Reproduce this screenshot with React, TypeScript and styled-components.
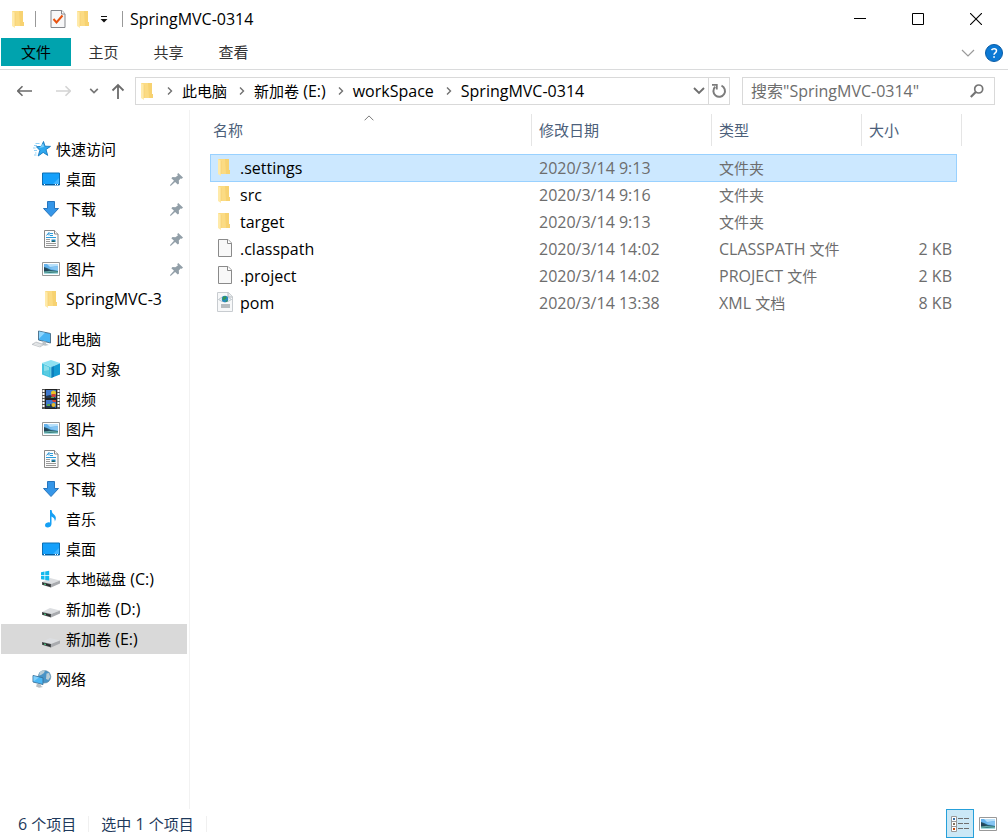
import React from "react";
import styled, { createGlobalStyle, css } from "styled-components";

const GlobalStyle = createGlobalStyle`
  *, *::before, *::after { box-sizing: border-box; }
  body {
    margin: 0;
    background: #fff;
    color: #000;
    font-family: "Open Sans", "Noto Sans CJK SC", sans-serif;
    font-size: 16px;
    line-height: 24px;
  }
  button, input { font: inherit; color: inherit; }
  button { border: 0; padding: 0; background: transparent; }
  svg { display: block; flex: none; }
`;

/* ---------- text ---------- */

const Han = styled.span`
  font-size: 15px;
`;

/* Chinese runs are set one pixel smaller than the Latin text around them. */
function Mixed({ text }: { text: string }) {
  const runs = text.split(/([\u4e00-\u9fff]+)/).filter(Boolean);
  return (
    <>
      {runs.map((run, i) =>
        /[\u4e00-\u9fff]/.test(run) ? <Han key={i}>{run}</Han> : run
      )}
    </>
  );
}

/* ---------- icons ---------- */

const FolderIcon = () => (
  <svg width="14" height="18" viewBox="0 0 14 18" aria-hidden="true">
    <path d="M1 1h11v11h1v4H1z" fill="#fbdb83" />
    <path d="M8 1h4v11h1v4H9z" fill="#f7d271" />
    <path d="M1 1l3 2v15l-3-2z" fill="#ffeaa9" />
    <path d="M4 3v13" stroke="#f3cd6b" strokeWidth=".6" />
  </svg>
);

const CheckDocIcon = () => (
  <svg width="16" height="18" viewBox="0 0 16 18" aria-hidden="true">
    <path d="M1 .5h11L15 4v13.500H1z" fill="#f7f7f8" stroke="#85878c" />
    <path d="M11.500.5V4H15" fill="#fff" stroke="#85878c" />
    <path d="M3.500 9l3 3.500 6-7" fill="none" stroke="#e8520f" strokeWidth="2" />
  </svg>
);

const QuickMenuIcon = () => (
  <svg width="8" height="8" viewBox="0 0 8 8" aria-hidden="true">
    <path d="M1 1.500h6" stroke="#111" />
    <path d="M.5 4h7L4 7.500z" fill="#111" />
  </svg>
);

const MinimizeIcon = () => (
  <svg width="12" height="12" viewBox="0 0 12 12" aria-hidden="true">
    <path d="M0 5.500h12" stroke="#000" />
  </svg>
);
const MaximizeIcon = () => (
  <svg width="12" height="12" viewBox="0 0 12 12" aria-hidden="true">
    <path d="M.5.5h11v11H.5z" fill="none" stroke="#000" />
  </svg>
);
const CloseIcon = () => (
  <svg width="12" height="12" viewBox="0 0 12 12" aria-hidden="true">
    <path d="M0 0l12 12M12 0L0 12" stroke="#000" strokeWidth="1.100" />
  </svg>
);

const ExpandIcon = () => (
  <svg width="14" height="8" viewBox="0 0 14 8" aria-hidden="true">
    <path d="M1 1l6 6 6-6" fill="none" stroke="#9a9a9a" strokeWidth="1.200" />
  </svg>
);

const HelpIcon = () => (
  <svg width="18" height="18" viewBox="0 0 18 18" aria-hidden="true">
    <circle cx="9" cy="9" r="8.500" fill="#0c79d4" stroke="#0a5ca5" />
    <path d="M6.500 6.200q.8-1.500 2.600-1.500 2.400 0 2.400 2 0 1.200-1.300 2.100-1.200.8-1.200 2" fill="none" stroke="#fff" strokeWidth="1.500" />
    <path d="M8.200 12.200h1.700v1.600H8.200z" fill="#fff" />
  </svg>
);

const ArrowIcon = ({ color, flip }: { color: string; flip?: boolean }) => (
  <svg width="16" height="12" viewBox="0 0 16 12" aria-hidden="true">
    <path
      d={flip ? "M1 6h14M10.500 1.200L15.300 6l-4.800 4.800" : "M15 6H1M5.500 1.200L.7 6l4.800 4.800"}
      fill="none"
      stroke={color}
      strokeWidth="1.600"
    />
  </svg>
);

const UpIcon = () => (
  <svg width="14" height="16" viewBox="0 0 14 16" aria-hidden="true">
    <path d="M7 16V2M1.500 7.500L7 2l5.500 5.500" fill="none" stroke="#6b6b6b" strokeWidth="1.800" />
  </svg>
);

const SmallDownIcon = () => (
  <svg width="10" height="6" viewBox="0 0 10 6" aria-hidden="true">
    <path d="M1.200.8L5 4.600 8.800.8" fill="none" stroke="#777" strokeWidth="1.700" />
  </svg>
);

const DownIcon = () => (
  <svg width="12" height="8" viewBox="0 0 12 8" aria-hidden="true">
    <path d="M1 1l5 5 5-5" fill="none" stroke="#6f6f6f" strokeWidth="1.900" />
  </svg>
);

const CrumbIcon = () => (
  <svg width="6" height="8" viewBox="0 0 6 8" aria-hidden="true">
    <path d="M1 .5L4.500 4 1 7.500" fill="none" stroke="#707070" strokeWidth="1.400" />
  </svg>
);

const RefreshIcon = () => (
  <svg width="16" height="16" viewBox="0 0 16 16" aria-hidden="true">
    <path d="M4.200 3.800A5.800 5.800 0 1 0 10.500 2.700" fill="none" stroke="#7c7c7c" strokeWidth="2" />
    <path d="M1 1.800h4.800v4.800" fill="none" stroke="#7c7c7c" strokeWidth="1.800" />
  </svg>
);

const SearchIcon = () => (
  <svg width="14" height="14" viewBox="0 0 14 14" aria-hidden="true">
    <circle cx="8.700" cy="5" r="4" fill="none" stroke="#747474" strokeWidth="1.700" />
    <path d="M5.800 8L.8 13" stroke="#747474" strokeWidth="2.200" />
  </svg>
);

const SortIcon = () => (
  <svg width="10" height="6" viewBox="0 0 10 6" aria-hidden="true">
    <path d="M.6 5.300L5 .9l4.400 4.400" fill="none" stroke="#7a7a7a" />
  </svg>
);

const PinIcon = () => (
  <svg width="13" height="13" viewBox="0 0 13 13" aria-hidden="true">
    <path d="M8.200 0L13 4.600 11.800 5.800 10.600 5.400 8.800 7.600 9 10.400 7.800 11.400 5.100 8.900 1.200 12.600 0 13 .3 11.700 4 7.800 1.300 5.300 2.500 4 5.300 4.300 7.900 2.400 7.200 1.200z" fill="#929fa8" />
  </svg>
);

const StarIcon = () => (
  <svg width="18" height="18" viewBox="0 0 18 18" aria-hidden="true">
    <path d="M10.500 1.500l1.500 4.700 5.500.2-4.500 3.100 1.700 5.900-4.500-3-5 3.600 1.600-5.700-3.400-3.600 5-.3z" fill="#2fa8ef" stroke="#1478be" strokeWidth=".9" />
    <path d="M10.200 3.500l.8 3.600-4.800 1z" fill="#7ed0fb" />
    <path d="M2.500 3.500h4M1 5.500h3M0 8h2.500M1 10.500h3M2 13h1.500M1 15h2.500" stroke="#61bdf2" strokeWidth=".7" />
  </svg>
);

const DesktopIcon = () => (
  <svg width="18" height="18" viewBox="0 0 18 18" aria-hidden="true">
    <path d="M.5 3h17v12H.5z" fill="#15a0fb" stroke="#0d70b6" />
    <path d="M11 14l6-6v6z" fill="#43b5ff" />
    <path d="M1 14.500h16" stroke="#075c99" />
    <path d="M2 14.500h1M13 14.500h1M15 14.500h1" stroke="#fff" />
  </svg>
);

const DownloadIcon = () => (
  <svg width="18" height="18" viewBox="0 0 18 18" aria-hidden="true">
    <path d="M5.500 1.500h7v7h4L9 16.500 1.500 8.500h4z" fill="#3596e8" stroke="#2775bd" />
  </svg>
);

const DocumentIcon = () => (
  <svg width="18" height="18" viewBox="0 0 18 18" aria-hidden="true">
    <path d="M2.500.5h10l3.500 3.500v13.500H2.500z" fill="#fcfcfc" stroke="#888" />
    <path d="M12.500.5V4H16" fill="#fff" stroke="#888" />
    <path d="M4.500 5.500L7 2.500v3" fill="none" stroke="#188bd0" />
    <path d="M8 3.500h3M8 5.500h3M4 7.500h10" stroke="#2b9dde" />
    <path d="M4 9.500h4M4 11.500h4M4 13.500h10M4 15.500h10" stroke="#9a9a9a" />
    <path d="M9.500 9.500h4v2.500h-4z" fill="#2487bb" />
    <path d="M9.500 12l1.500-1.200 2.500 1.200z" fill="#275942" />
  </svg>
);

const PictureIcon = () => (
  <svg width="18" height="18" viewBox="0 0 18 18" aria-hidden="true">
    <path d="M.5 2.500h17v13H.5z" fill="#fff" stroke="#999" />
    <path d="M2 4h14v10H2z" fill="#65b2ec" />
    <path d="M5 4h11v2L8 7z" fill="#b8e0fa" />
    <path d="M7 8l9-2v5z" fill="#86c5f2" />
    <path d="M2 7l3 1 4 2 7 1v1H2z" fill="#27596a" />
    <path d="M2 7.500l3 1.500 2 2H2z" fill="#24445a" />
    <path d="M2 11h14v3H2z" fill="#a7dbe0" />
    <path d="M2 11l5 .5 9-.5v1.500l-8 .5-6-.5z" fill="#3b817e" />
  </svg>
);

const ComputerIcon = () => (
  <svg width="20" height="18" viewBox="0 0 20 18" aria-hidden="true">
    <path d="M6.500 1l12 2.500v9.500l-12-3z" fill="#48b3f3" stroke="#476b85" strokeWidth=".9" />
    <path d="M7 1.500l6 1.300-6 6z" fill="#8ed6ff" />
    <path d="M11 11l3 .8v2l3 1.200-4 .8-3-1z" fill="#bcc3c8" />
    <path d="M4 12l8 2.400-4 2.600-8-2.600z" fill="#d2d6d9" stroke="#aeb4b9" strokeWidth=".6" />
    <path d="M3 13.200l6.500 2M1.800 14.200l6.200 2" stroke="#f5f5f5" strokeWidth=".6" />
  </svg>
);

const CubeIcon = () => (
  <svg width="18" height="18" viewBox="0 0 18 18" aria-hidden="true">
    <path d="M0 3l9-3 9 3-9 4z" fill="#8ee2f2" />
    <path d="M0 3l9 4v11l-9-3.500z" fill="#47c4e0" />
    <path d="M9 7l9-4v11.500L9 18z" fill="#139bd2" />
    <path d="M2 5l5 2.300v8.200l-5-2z" fill="#8cdeea" />
    <path d="M2 11l5-1v5.500l-5-2z" fill="#58cbe0" />
    <path d="M9 7l3-1.300v11L9 18z" fill="#0c80bd" />
    <path d="M0 3l9 4 9-4M9 7v11" fill="none" stroke="#b3eef7" strokeWidth=".5" />
  </svg>
);

const VideoIcon = () => (
  <svg width="18" height="20" viewBox="0 0 18 20" aria-hidden="true">
    <path d="M0 0h18v20H0z" fill="#555" />
    <path d="M1.500 1v18M16.500 1v18" stroke="#fff" strokeWidth="2" strokeDasharray="2 1" />
    <path d="M3 0h12v20H3z" fill="#222" />
    <path d="M4 1h10v8H4zM4 11h10v8H4z" fill="#3f78cc" />
    <path d="M4 7l4-1 6 3H4zM4 17l5-2 5 4H4z" fill="#20364e" />
    <circle cx="11.500" cy="4" r="2.500" fill="#e5c52a" />
    <path d="M9.500 5h4v3h-4zM10 11h4v2h-3z" fill="#d54231" />
    <path d="M9 8h3v1H9zM5 15h3v2H5z" fill="#56a552" />
    <circle cx="11.500" cy="16" r="2" fill="#e6b92b" />
  </svg>
);

const MusicIcon = () => (
  <svg width="18" height="18" viewBox="0 0 18 18" aria-hidden="true">
    <path d="M8 0h1.500q.2 3 2.500 4.500 3.300 3 .8 7 .3-3.500-3.300-5v7.500q-.2 3-3.500 3.500-3 .1-3-2 0-2.700 3.500-3.200.8 0 1.500.2z" fill="#16a0f4" />
  </svg>
);

const DriveBody = () => (
  <>
    <path d="M0 12l8-4 10 2.500-9 3.500z" fill="#dcdee1" />
    <path d="M9 14l9-3.500v3L9 17.500z" fill="#a9abaf" />
    <path d="M0 12l9 2v3.500l-9-2.800z" fill="#4b4f51" />
    <path d="M1 13l7 1.700v1.500l-7-1.900z" fill="#24292a" />
    <path d="M2 14l2 .5" stroke="#50d68a" />
  </>
);

const DriveIcon = () => (
  <svg width="18" height="18" viewBox="0 0 18 18" aria-hidden="true">
    <DriveBody />
  </svg>
);

const SystemDriveIcon = () => (
  <svg width="20" height="18" viewBox="-1 0 20 18" aria-hidden="true">
    <DriveBody />
    <path d="M-1 2.200l3.500-.7v3.800H-1zM3.200 1.400l4-.7v4.600h-4zM-1 6h3.500v3.800L-1 9.200zM3.200 6h4v4.600l-4-.7z" fill="#13b9ed" />
  </svg>
);

const NetworkIcon = () => (
  <svg width="20" height="18" viewBox="0 0 20 18" aria-hidden="true">
    <circle cx="12.500" cy="6.800" r="6.300" fill="#4a94c6" stroke="#6c8ea5" strokeWidth=".6" />
    <path d="M8 2q3-2.400 5-1.400L12 3l-3 2-2 .5zM14.500 3.500l2.500-.5 1.300 4-2 3-2.300-1z" fill="#b9cdd6" />
    <path d="M1 5.500l10 2.300v6.700L1 12z" fill="#4ab7f5" stroke="#3b7198" strokeWidth=".9" />
    <path d="M1.500 6.100L7 7.400l-5.500 4z" fill="#82cffb" />
    <path d="M5 13.500l4 1v1.500l2 1-4 .7-3-1.200z" fill="#b7bfc4" />
  </svg>
);

const BlankFileIcon = () => (
  <svg width="16" height="18" viewBox="0 0 16 18" aria-hidden="true">
    <path d="M1.500.5h9.500l3.500 3.500v13.500h-13z" fill="#f8f8f8" stroke="#8a8a8a" />
    <path d="M10.500.5V4.500h4" fill="#fff" stroke="#8a8a8a" />
  </svg>
);

const XmlFileIcon = () => (
  <svg width="16" height="20" viewBox="0 0 16 20" aria-hidden="true">
    <path d="M.5.5h11L15.500 4.500v15H.5z" fill="#f7f8f9" stroke="#c8ccd0" />
    <path d="M11 .5V5h4.500" fill="#e8ebee" stroke="#b5babe" />
    <path d="M1.500 7.500q6.500-6 13 0-6.500 5-13 0z" fill="#eef2f4" stroke="#a9b5bc" strokeWidth=".7" />
    <circle cx="8" cy="7" r="3.200" fill="#2589c3" />
    <path d="M6 4.800l3-.5.5 2-2 1.500-2 .5zM8 9l3-1-1 2z" fill="#369750" />
    <path d="M4 13h9M4 15h9" stroke="#a3a8ac" strokeWidth="1.500" />
  </svg>
);

const DetailsViewIcon = () => (
  <svg width="18" height="16" viewBox="0 0 18 16" aria-hidden="true">
    <path d="M.5.5h5v15h-5zM.5 5.500h5M.5 10.500h5" fill="#fff" stroke="#999" />
    <path d="M2 2h2v2H2z" fill="#356fa7" />
    <path d="M2 7h2v2H2z" fill="#86755e" />
    <path d="M2 12h2v2H2z" fill="#c64b0c" />
    <path d="M7 2.500h5M13 2.500h5M7 7.500h5M13 7.500h5M7 12.500h5M13 12.500h5" stroke="#6f6f6f" />
  </svg>
);

/* ---------- window frame ---------- */

const Window = styled.div`
  display: flex;
  flex-direction: column;
  min-height: 100vh;
`;

const TitleBar = styled.header`
  display: flex;
  align-items: center;
  height: 38px;
  padding: 0 3px 0 11px;
`;

const QuickTools = styled.div`
  display: flex;
  align-items: center;
  gap: 10px;
`;

const Divider = styled.span`
  width: 1px;
  height: 16px;
  background: #999;
`;

const WindowTitle = styled.h1`
  flex: 1;
  margin: 0 0 0 7px;
  font-size: 16px;
  font-weight: 400;
`;

const IconButton = styled.button<{ $width?: number }>`
  display: flex;
  align-items: center;
  justify-content: center;
  ${(p) => p.$width && css`width: ${p.$width}px;`}
  align-self: stretch;
`;

const Ribbon = styled.nav`
  display: flex;
  align-items: flex-start;
  height: 32px;
  padding: 0 5px 0 1px;
  border-bottom: 1px solid #dadbdc;
`;

const Tab = styled.button<{ $primary?: boolean }>`
  width: ${(p) => (p.$primary ? 70 : 65)}px;
  height: 28px;
  line-height: 28px;
  background: ${(p) => (p.$primary ? "#00a3ae" : "transparent")};
  color: ${(p) => (p.$primary ? "#000" : "#333")};
`;

const RibbonTools = styled.div`
  display: flex;
  gap: 10px;
  height: 30px;
  margin-left: auto;
`;

const NavBar = styled.div`
  display: flex;
  align-items: center;
  height: 40px;
  padding: 2px 13px 0 12px;
`;

const History = styled.div`
  display: flex;
  height: 28px;
`;

const AddressBox = styled.div`
  display: flex;
  flex: 1;
  align-items: center;
  height: 28px;
  padding-left: 4px;
  border: 1px solid #d9d9d9;
`;

const Crumbs = styled.ol`
  display: flex;
  flex: 1;
  margin: 0;
  padding: 0 0 0 13px;
  list-style: none;
`;

const Crumb = styled.li`
  display: flex;
  align-items: center;
  gap: 9px;
  margin-right: 12px;
`;

const RefreshSlot = styled.div`
  display: flex;
  align-self: stretch;
  border-left: 1px solid #d9d9d9;
`;

const SearchBox = styled.label`
  display: flex;
  align-items: center;
  width: 253px;
  height: 28px;
  margin-left: 12px;
  padding: 0 10px 0 8px;
  border: 1px solid #d9d9d9;
`;

const SearchInput = styled.input`
  flex: 1;
  min-width: 0;
  height: 24px;
  padding: 0;
  border: 0;
  outline: 0;
  background: transparent;
  &::placeholder { color: #6d6d6d; opacity: 1; }
`;

const Body = styled.div`
  display: flex;
  flex: 1;
`;

/* ---------- navigation pane ---------- */

const Sidebar = styled.nav`
  width: 190px;
  flex: none;
  padding: 24px 2px 0 1px;
  border-right: 1px solid #f2f2f2;
`;

const Group = styled.ul`
  margin: 0 0 10px;
  padding: 0;
  list-style: none;
`;

const SideItem = styled.a<{ $root?: boolean; $active?: boolean }>`
  display: flex;
  align-items: center;
  height: 30px;
  padding: 0 4px 0 ${(p) => (p.$root ? 31 : 40)}px;
  background: ${(p) => (p.$active ? "#d9d9d9" : "transparent")};
  color: inherit;
  text-decoration: none;
  white-space: nowrap;
`;

const SideIcon = styled.span<{ $root?: boolean }>`
  display: flex;
  justify-content: center;
  width: 20px;
  margin-right: ${(p) => (p.$root ? 4 : 5)}px;
`;

const SideLabel = styled.span`
  flex: 1;
`;

/* ---------- file list ---------- */

const Content = styled.main`
  flex: 1;
  min-width: 0;
  padding: 4px 0 0 20px;
`;

const FileTable = styled.table`
  display: block;
  width: 752px;
`;

const HeadSection = styled.thead`
  display: block;
`;

const BodySection = styled.tbody`
  display: block;
  padding: 8px 5px 0 0;
`;

const columns = css`
  display: grid;
  grid-template-columns: 322px 180px 150px 1fr;
`;

const HeadRow = styled.tr`
  ${columns}
`;

const HeadCell = styled.th<{ $first?: boolean }>`
  position: relative;
  height: 32px;
  padding: 0 0 0 ${(p) => (p.$first ? 3 : 7)}px;
  border-right: 1px solid #e5e5e5;
  color: #4c607a;
  font-weight: 400;
  line-height: 32px;
  text-align: left;
`;

const SortMark = styled.span`
  position: absolute;
  top: 1px;
  left: calc(50% - 7px);
`;

const FileRow = styled.tr<{ $selected?: boolean }>`
  ${columns}
  height: 28px;
  margin-bottom: -1px;
  border: 1px solid ${(p) => (p.$selected ? "#99d1ff" : "transparent")};
  background: ${(p) => (p.$selected ? "#cce8ff" : "transparent")};
`;

const Cell = styled.td<{ $right?: boolean }>`
  padding: 1px ${(p) => (p.$right ? 4 : 0)}px 0 6px;
  color: #6d6d6d;
  text-align: ${(p) => (p.$right ? "right" : "left")};
  white-space: nowrap;
`;

const NameCell = styled(Cell)`
  display: flex;
  color: #000;
`;

const FileIconSlot = styled.span`
  display: flex;
  align-items: center;
  width: 23px;
  height: 22px;
`;

/* ---------- status bar ---------- */

const StatusBar = styled.footer`
  display: flex;
  align-items: center;
  height: 30px;
  padding: 0 6px 0 18px;
  color: #1e395b;
`;

const StatusText = styled.span`
  padding-right: 12px;
  margin-right: 12px;
  border-right: 1px solid #f0f0f0;
  line-height: 16px;
`;

const ViewSwitch = styled.div`
  display: flex;
  height: 30px;
  margin-left: auto;
`;

const ViewButton = styled.button<{ $on?: boolean }>`
  display: flex;
  align-items: center;
  justify-content: center;
  width: 28px;
  height: 29px;
  border: 1px solid ${(p) => (p.$on ? "#26a0da" : "transparent")};
  background: ${(p) => (p.$on ? "#cbe8f6" : "transparent")};
`;

/* ---------- data ---------- */

type Place = { name: string; icon: React.FC; root?: boolean; pinned?: boolean; active?: boolean };

const places: Place[][] = [
  [
    { name: "快速访问", icon: StarIcon, root: true },
    { name: "桌面", icon: DesktopIcon, pinned: true },
    { name: "下载", icon: DownloadIcon, pinned: true },
    { name: "文档", icon: DocumentIcon, pinned: true },
    { name: "图片", icon: PictureIcon, pinned: true },
    { name: "SpringMVC-3", icon: FolderIcon },
  ],
  [
    { name: "此电脑", icon: ComputerIcon, root: true },
    { name: "3D 对象", icon: CubeIcon },
    { name: "视频", icon: VideoIcon },
    { name: "图片", icon: PictureIcon },
    { name: "文档", icon: DocumentIcon },
    { name: "下载", icon: DownloadIcon },
    { name: "音乐", icon: MusicIcon },
    { name: "桌面", icon: DesktopIcon },
    { name: "本地磁盘 (C:)", icon: SystemDriveIcon },
    { name: "新加卷 (D:)", icon: DriveIcon },
    { name: "新加卷 (E:)", icon: DriveIcon, active: true },
  ],
  [{ name: "网络", icon: NetworkIcon, root: true }],
];

const files = [
  { name: ".settings", date: "2020/3/14 9:13", type: "文件夹", size: "", icon: FolderIcon, selected: true },
  { name: "src", date: "2020/3/14 9:16", type: "文件夹", size: "", icon: FolderIcon },
  { name: "target", date: "2020/3/14 9:13", type: "文件夹", size: "", icon: FolderIcon },
  { name: ".classpath", date: "2020/3/14 14:02", type: "CLASSPATH 文件", size: "2 KB", icon: BlankFileIcon },
  { name: ".project", date: "2020/3/14 14:02", type: "PROJECT 文件", size: "2 KB", icon: BlankFileIcon },
  { name: "pom", date: "2020/3/14 13:38", type: "XML 文档", size: "8 KB", icon: XmlFileIcon },
];

const path = ["此电脑", "新加卷 (E:)", "workSpace", "SpringMVC-0314"];

export default function App() {
  return (
    <Window>
      <GlobalStyle />
      <TitleBar>
        <QuickTools>
          <FolderIcon />
          <Divider />
          <IconButton aria-label="属性" $width={24}><CheckDocIcon /></IconButton>
          <IconButton aria-label="新建文件夹" $width={6}><FolderIcon /></IconButton>
          <IconButton aria-label="自定义快速访问工具栏" $width={16}><QuickMenuIcon /></IconButton>
          <Divider />
        </QuickTools>
        <WindowTitle>SpringMVC-0314</WindowTitle>
        <IconButton aria-label="最小化" $width={58}><MinimizeIcon /></IconButton>
        <IconButton aria-label="最大化" $width={58}><MaximizeIcon /></IconButton>
        <IconButton aria-label="关闭" $width={58}><CloseIcon /></IconButton>
      </TitleBar>

      <Ribbon>
        <Tab $primary><Mixed text="文件" /></Tab>
        {["主页", "共享", "查看"].map((t) => (
          <Tab key={t}><Mixed text={t} /></Tab>
        ))}
        <RibbonTools>
          <IconButton aria-label="展开功能区"><ExpandIcon /></IconButton>
          <IconButton aria-label="帮助"><HelpIcon /></IconButton>
        </RibbonTools>
      </Ribbon>

      <NavBar>
        <History>
          <IconButton aria-label="后退" $width={26}><ArrowIcon color="#6b6b6b" /></IconButton>
          <IconButton aria-label="前进" $width={50} disabled><ArrowIcon color="#d4d4d4" flip /></IconButton>
          <IconButton aria-label="最近位置" $width={12}><SmallDownIcon /></IconButton>
          <IconButton aria-label="向上" $width={35}><UpIcon /></IconButton>
        </History>
        <AddressBox>
          <FolderIcon />
          <Crumbs>
            {path.map((p) => (
              <Crumb key={p}>
                <CrumbIcon />
                <button><Mixed text={p} /></button>
              </Crumb>
            ))}
          </Crumbs>
          <IconButton aria-label="以前的位置" $width={18}><DownIcon /></IconButton>
          <RefreshSlot>
            <IconButton aria-label="刷新" $width={20}><RefreshIcon /></IconButton>
          </RefreshSlot>
        </AddressBox>
        <SearchBox>
          <SearchInput type="text" aria-label="搜索" placeholder={'搜索"SpringMVC-0314"'} />
          <SearchIcon />
        </SearchBox>
      </NavBar>

      <Body>
        <Sidebar>
          {places.map((group) => (
            <Group key={group[0].name}>
              {group.map(({ name, icon: Icon, root, pinned, active }) => (
                <li key={name}>
                  <SideItem href="#" $root={root} $active={active}>
                    <SideIcon $root={root}><Icon /></SideIcon>
                    <SideLabel><Mixed text={name} /></SideLabel>
                    {pinned && <PinIcon />}
                  </SideItem>
                </li>
              ))}
            </Group>
          ))}
        </Sidebar>

        <Content>
          <FileTable>
            <HeadSection>
              <HeadRow>
                <HeadCell $first>
                  <Mixed text="名称" />
                  <SortMark><SortIcon /></SortMark>
                </HeadCell>
                {["修改日期", "类型", "大小"].map((h) => (
                  <HeadCell key={h}><Mixed text={h} /></HeadCell>
                ))}
              </HeadRow>
            </HeadSection>
            <BodySection>
              {files.map(({ name, date, type, size, icon: Icon, selected }) => (
                <FileRow key={name} $selected={selected}>
                  <NameCell>
                    <FileIconSlot><Icon /></FileIconSlot>
                    {name}
                  </NameCell>
                  <Cell>{date}</Cell>
                  <Cell><Mixed text={type} /></Cell>
                  <Cell $right>{size}</Cell>
                </FileRow>
              ))}
            </BodySection>
          </FileTable>
        </Content>
      </Body>

      <StatusBar>
        <StatusText><Mixed text="6 个项目" /></StatusText>
        <StatusText><Mixed text="选中 1 个项目" /></StatusText>
        <ViewSwitch>
          <ViewButton $on aria-label="详细信息"><DetailsViewIcon /></ViewButton>
          <ViewButton aria-label="大图标"><PictureIcon /></ViewButton>
        </ViewSwitch>
      </StatusBar>
    </Window>
  );
}
